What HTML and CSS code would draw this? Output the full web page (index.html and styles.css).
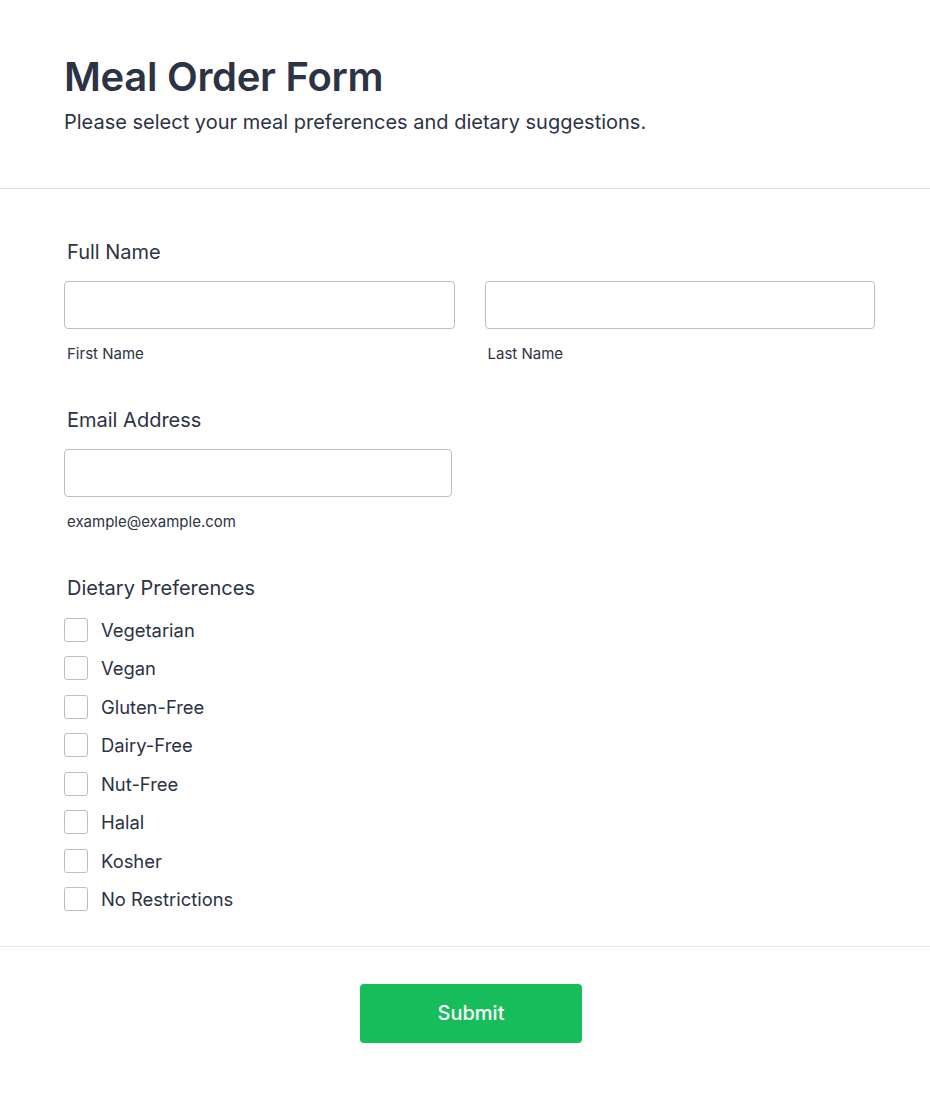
FILE: index.html
```html
<!DOCTYPE html>
<html lang="en">
  <head>
    <meta charset="UTF-8" />
    <meta name="viewport" content="width=device-width, initial-scale=1.0" />
    <title>Meal Order Form</title>
    <link rel="stylesheet" href="styles.css">
  </head>
  <body>
    <form class="order-form">
      <div class="form-header">
        <h1>Meal Order Form</h1>
        <p>Please select your meal preferences and dietary suggestions.</p>
      </div>

      <div class="form-body">
        <div class="field">
          <label class="field-label">Full Name</label>
          <div class="name-row">
            <div class="sub-field">
              <input type="text" id="first-name" />
              <label class="sub-label" for="first-name">First Name</label>
            </div>
            <div class="sub-field">
              <input type="text" id="last-name" />
              <label class="sub-label" for="last-name">Last Name</label>
            </div>
          </div>
        </div>

        <div class="field">
          <label class="field-label" for="email">Email Address</label>
          <div class="sub-field email">
            <input type="email" id="email" />
            <label class="sub-label" for="email">example@example.com</label>
          </div>
        </div>

        <div class="field">
          <label class="field-label checks-label">Dietary Preferences</label>
          <div class="checks">
            <label class="check"><input type="checkbox" /><span>Vegetarian</span></label>
            <label class="check"><input type="checkbox" /><span>Vegan</span></label>
            <label class="check"><input type="checkbox" /><span>Gluten-Free</span></label>
            <label class="check"><input type="checkbox" /><span>Dairy-Free</span></label>
            <label class="check"><input type="checkbox" /><span>Nut-Free</span></label>
            <label class="check"><input type="checkbox" /><span>Halal</span></label>
            <label class="check"><input type="checkbox" /><span>Kosher</span></label>
            <label class="check"><input type="checkbox" /><span>No Restrictions</span></label>
          </div>
        </div>
      </div>

      <div class="form-footer">
        <button type="submit">Submit</button>
      </div>
    </form>
  </body>
</html>
```

FILE: styles.css
```css
body {
  margin: 0;
  font-family: Inter, "Noto Sans", Arial, sans-serif;
  color: #2c3345;
  background: #fff;
}

.form-header {
  padding: 53px 64px 54px;
  border-bottom: 1px solid #d9dbe6;
}

.form-header h1 {
  margin: 0;
  font-size: 40px;
  line-height: 48px;
  font-weight: 600;
  letter-spacing: -0.3px;
}

.form-header p {
  margin: 9px 0 0;
  font-size: 20px;
  line-height: 24px;
  font-weight: 400;
}

.form-body {
  padding: 49px 55px 35px 64px;
  border-bottom: 1px solid #e3e5ec;
  display: flex;
  flex-direction: column;
  gap: 43px;
}

.field-label {
  display: block;
  margin: 0 0 15px 3px;
  font-size: 20px;
  line-height: 28px;
  font-weight: 400;
}

.field-label.checks-label {
  margin-bottom: 16px;
}

.name-row {
  display: flex;
  gap: 30px;
}

.sub-field {
  flex: 1;
  display: flex;
  flex-direction: column;
}

.sub-field.email {
  width: 388px;
}

.sub-field input {
  box-sizing: border-box;
  height: 48px;
  width: 100%;
  border: 1px solid #b8bdc9;
  border-radius: 4px;
  padding: 0 12px;
  font: inherit;
}

.sub-label {
  margin: 16px 0 0 3px;
  font-size: 15px;
  line-height: 18px;
}

.checks {
  display: flex;
  flex-direction: column;
  gap: 14.43px;
}

.check {
  display: flex;
  align-items: center;
  gap: 13px;
  font-size: 18.4px;
  line-height: 24px;
}

.check input {
  appearance: none;
  margin: 0;
  width: 24px;
  height: 24px;
  border: 1px solid #b8bdc9;
  border-radius: 3px;
  background: #fff;
}

.form-footer {
  padding: 37px 52px 50px 64px;
  display: flex;
  justify-content: center;
}

.form-footer button {
  width: 222px;
  height: 59px;
  border: none;
  border-radius: 4px;
  background-color: #18bd5b;
  color: #fff;
  font: inherit;
  font-size: 20px;
  font-weight: 500;
  cursor: pointer;
}
```
